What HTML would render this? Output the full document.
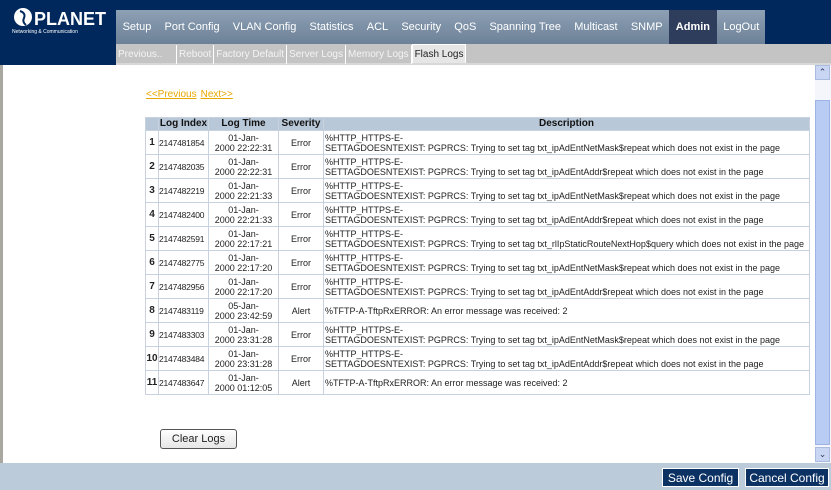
<!DOCTYPE html>
<html><head><meta charset="utf-8"><style>
*{margin:0;padding:0;box-sizing:border-box}
body{width:831px;height:490px;overflow:hidden;background:#fff;font-family:"Liberation Sans",Tahoma,sans-serif;position:relative}
.abs{position:absolute}
#top{left:0;top:0;width:831px;height:44px;background:#00285c}
#logo{left:0;top:0;width:116px;height:65px;background:#00285c}
#menu{left:116px;top:10px;width:649px;height:34px;background:linear-gradient(#8da0b4,#6d8198);display:flex;align-items:center;color:#fff;font-size:11px}
#menu span{padding:0 6.6px;height:34px;line-height:34px;white-space:nowrap}
#menu .act{background:#2f3d5c;font-weight:bold}
#sub{left:116px;top:44px;width:715px;height:21px;background:#c4c4c4;border-bottom:2px solid #d8d8d8;font-size:10px;color:#f4f4f4}
#sub span{display:inline-block;height:19px;line-height:19px;padding:0 2px;border-right:1px solid #fff}
#sub .on{background:#e6e6e6;color:#222;border:1px solid #fff;border-bottom:0}
#lb{left:0;top:65px;width:3px;height:398px;background:#a8a8a0}
#sb{left:815px;top:65px;width:16px;height:398px;background:#f4f6fb}
#thumb{left:815px;top:100px;width:15px;height:345px;background:#b8ccf4;border:1px solid #9db3e6}
.arr{left:815px;width:15px;height:15px;background:#c8d6f4;border:1px solid #aabbe0;font-size:9px;color:#335;text-align:center;line-height:13px}
#foot{left:0;top:463px;width:831px;height:27px;background:#bccbd9}
.btn{top:468px;height:19px;background:#0c3264;color:#fff;font-size:12px;line-height:19px;text-align:center;border:1px solid #fff}
#nav{left:146px;top:89px;font-size:10px;color:#e8a800}
#nav span{text-decoration:underline;margin-right:4px}
table{position:absolute;left:145px;top:117px;width:665px;table-layout:fixed;border-collapse:separate;border-spacing:1px;background:#c7d2de;font-size:9px;color:#222}
th{background:#b9c8d8;height:12px;font-size:10px;font-weight:bold;color:#111;line-height:12px;white-space:nowrap;overflow:hidden}
td{background:#fff;height:23px;line-height:10px;padding:0 1px;white-space:nowrap;overflow:hidden}
td.n{font-weight:bold;text-align:center;font-size:10px;padding:0}
td.i{font-size:8.5px;letter-spacing:-0.2px;padding:0}
td.c{text-align:center}
#clear{left:160px;top:429px;width:77px;height:20px;border:1px solid #555;border-radius:3px;background:linear-gradient(#fff,#e6e6e6);font-size:11px;text-align:center;line-height:18px;color:#222}
</style></head><body>
<div class="abs" id="top"></div>
<div class="abs" id="logo">
<svg width="116" height="40" style="position:absolute;left:12px;top:6px"><circle cx="11" cy="11" r="9" fill="#fff"/><path d="M8 5 q6 2 4 7 q-2 4 2 7" stroke="#00285c" stroke-width="2" fill="none"/><text x="22" y="19" fill="#fff" font-family="Liberation Sans" font-weight="bold" font-size="18">PLANET</text><text x="0" y="27" fill="#fff" font-size="5" font-family="Liberation Sans">Networking &amp; Communication</text></svg>
</div>
<div class="abs" id="menu"><span>Setup</span><span>Port Config</span><span>VLAN Config</span><span>Statistics</span><span>ACL</span><span>Security</span><span>QoS</span><span>Spanning Tree</span><span>Multicast</span><span>SNMP</span><span class="act">Admin</span><span>LogOut</span></div>
<div class="abs" id="sub"><span style="width:61px">Previous..</span><span>Reboot</span><span>Factory Default</span><span>Server Logs</span><span>Memory Logs</span><span class="on">Flash Logs</span></div>
<div class="abs" id="lb"></div>
<div class="abs" id="sb"></div>
<div class="abs" id="thumb"></div>
<div class="abs arr" style="top:65px">&#8963;</div>
<div class="abs arr" style="top:447px">&#8964;</div>
<div class="abs" id="nav"><span>&lt;&lt;Previous</span><span>Next&gt;&gt;</span></div>
<table>
<colgroup><col style="width:12px"><col style="width:49px"><col style="width:69px"><col style="width:44px"><col></colgroup>
<tr><th></th><th>Log Index</th><th>Log Time</th><th>Severity</th><th>Description</th></tr>
<tr><td class="n">1</td><td class="i">2147481854</td><td class="c">01-Jan-<br>2000 22:22:31</td><td class="c">Error</td><td>%HTTP_HTTPS-E-<br>SETTAGDOESNTEXIST: PGPRCS: Trying to set tag txt_ipAdEntNetMask$repeat which does not exist in the page</td></tr>
<tr><td class="n">2</td><td class="i">2147482035</td><td class="c">01-Jan-<br>2000 22:22:31</td><td class="c">Error</td><td>%HTTP_HTTPS-E-<br>SETTAGDOESNTEXIST: PGPRCS: Trying to set tag txt_ipAdEntAddr$repeat which does not exist in the page</td></tr>
<tr><td class="n">3</td><td class="i">2147482219</td><td class="c">01-Jan-<br>2000 22:21:33</td><td class="c">Error</td><td>%HTTP_HTTPS-E-<br>SETTAGDOESNTEXIST: PGPRCS: Trying to set tag txt_ipAdEntNetMask$repeat which does not exist in the page</td></tr>
<tr><td class="n">4</td><td class="i">2147482400</td><td class="c">01-Jan-<br>2000 22:21:33</td><td class="c">Error</td><td>%HTTP_HTTPS-E-<br>SETTAGDOESNTEXIST: PGPRCS: Trying to set tag txt_ipAdEntAddr$repeat which does not exist in the page</td></tr>
<tr><td class="n">5</td><td class="i">2147482591</td><td class="c">01-Jan-<br>2000 22:17:21</td><td class="c">Error</td><td>%HTTP_HTTPS-E-<br>SETTAGDOESNTEXIST: PGPRCS: Trying to set tag txt_rlIpStaticRouteNextHop$query which does not exist in the page</td></tr>
<tr><td class="n">6</td><td class="i">2147482775</td><td class="c">01-Jan-<br>2000 22:17:20</td><td class="c">Error</td><td>%HTTP_HTTPS-E-<br>SETTAGDOESNTEXIST: PGPRCS: Trying to set tag txt_ipAdEntNetMask$repeat which does not exist in the page</td></tr>
<tr><td class="n">7</td><td class="i">2147482956</td><td class="c">01-Jan-<br>2000 22:17:20</td><td class="c">Error</td><td>%HTTP_HTTPS-E-<br>SETTAGDOESNTEXIST: PGPRCS: Trying to set tag txt_ipAdEntAddr$repeat which does not exist in the page</td></tr>
<tr><td class="n">8</td><td class="i">2147483119</td><td class="c">05-Jan-<br>2000 23:42:59</td><td class="c">Alert</td><td>%TFTP-A-TftpRxERROR: An error message was received: 2</td></tr>
<tr><td class="n">9</td><td class="i">2147483303</td><td class="c">01-Jan-<br>2000 23:31:28</td><td class="c">Error</td><td>%HTTP_HTTPS-E-<br>SETTAGDOESNTEXIST: PGPRCS: Trying to set tag txt_ipAdEntNetMask$repeat which does not exist in the page</td></tr>
<tr><td class="n">10</td><td class="i">2147483484</td><td class="c">01-Jan-<br>2000 23:31:28</td><td class="c">Error</td><td>%HTTP_HTTPS-E-<br>SETTAGDOESNTEXIST: PGPRCS: Trying to set tag txt_ipAdEntAddr$repeat which does not exist in the page</td></tr>
<tr><td class="n">11</td><td class="i">2147483647</td><td class="c">01-Jan-<br>2000 01:12:05</td><td class="c">Alert</td><td>%TFTP-A-TftpRxERROR: An error message was received: 2</td></tr>
</table>
<div class="abs" id="clear">Clear Logs</div>
<div class="abs" id="foot"></div>
<div class="abs btn" style="left:662px;width:77px">Save Config</div>
<div class="abs btn" style="left:745px;width:84px">Cancel Config</div>
</body></html>
